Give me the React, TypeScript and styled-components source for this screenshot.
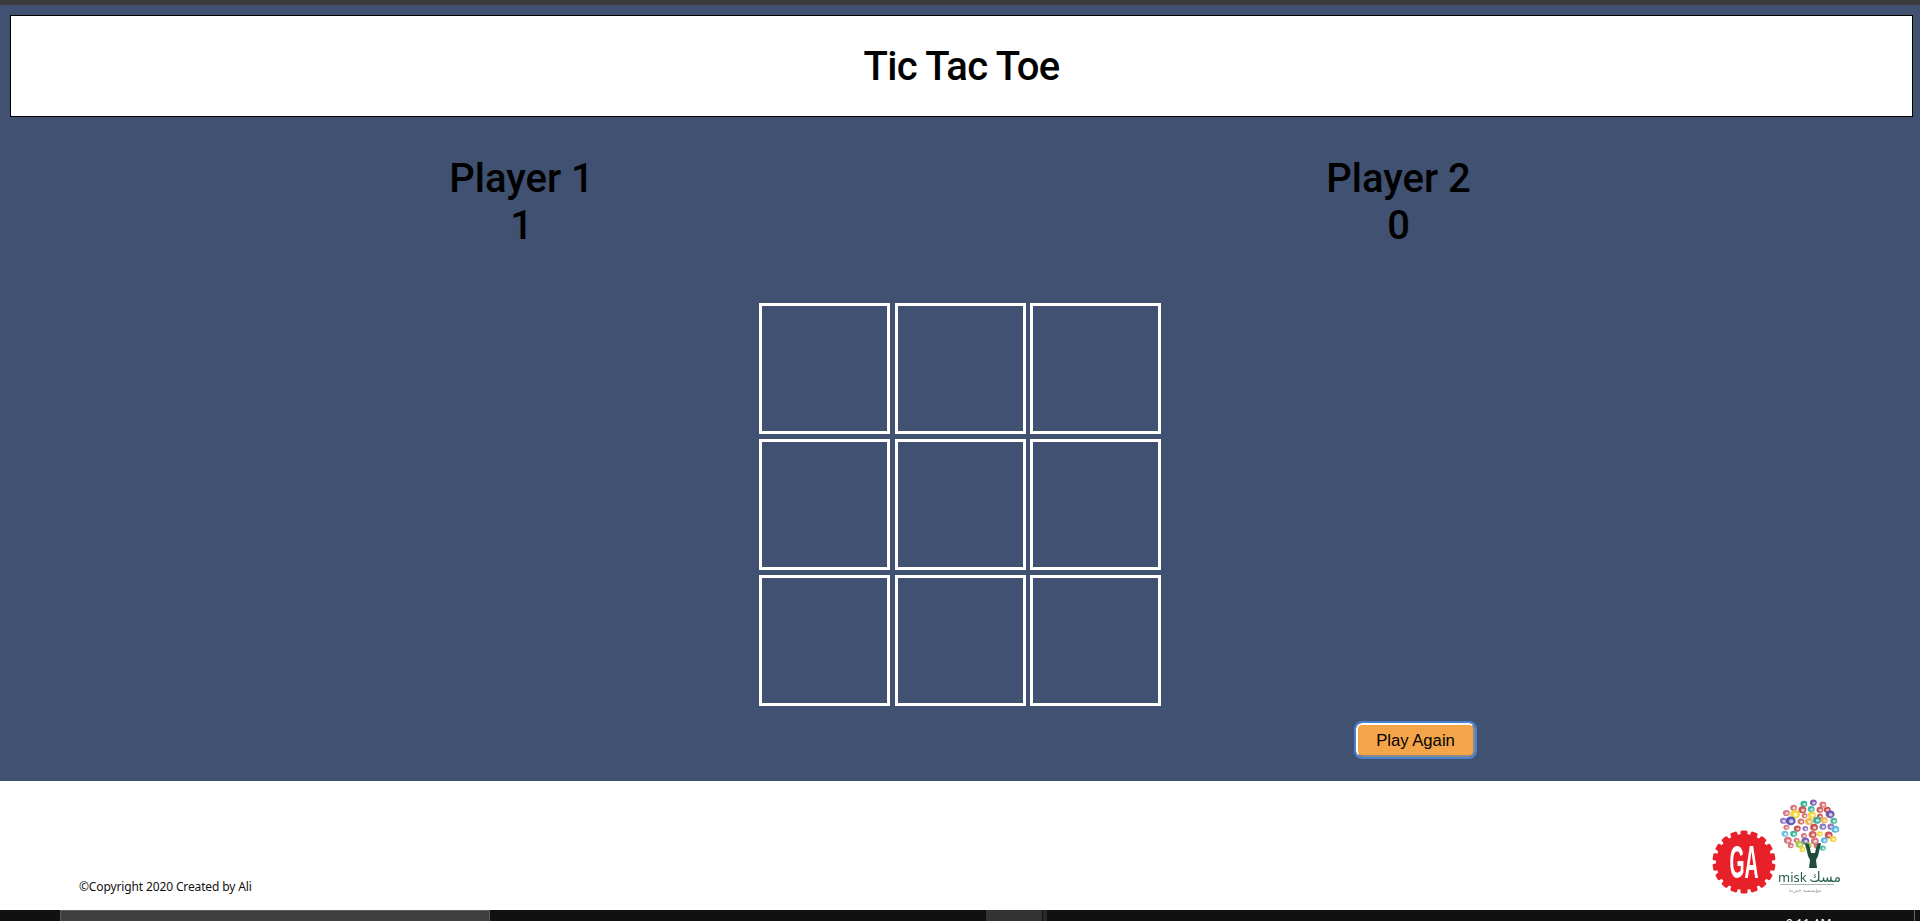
import React from "react";
import styled, { createGlobalStyle } from "styled-components";

const Global = createGlobalStyle`
  html, body { margin: 0; padding: 0; height: 100%; overflow: hidden; background: #111111; }
  * { box-sizing: border-box; }
`;

const Page = styled.div`
  width: 1920px;
  height: 921px;
  display: flex;
  flex-direction: column;
  overflow: hidden;
  font-family: Roboto, "Noto Sans", sans-serif;
  color: #000;
`;

const TopStrip = styled.div`
  height: 5px;
  flex: none;
  background: #3c3c3c;
`;

const Board = styled.main`
  height: 776px;
  flex: none;
  background: #405171;
  padding: 10px 7px 0 10px;
  display: flex;
  flex-direction: column;
`;

const Header = styled.header`
  height: 102px;
  flex: none;
  background: #fff;
  border: 1px solid #000;
  display: flex;
  align-items: center;
  justify-content: center;
  padding-top: 2px;
`;

const Title = styled.h1`
  margin: 0;
  font-size: 40px;
  font-weight: 500;
  letter-spacing: -0.7px;
  line-height: 46px;
`;

const Scores = styled.div`
  display: flex;
  justify-content: center;
  gap: 717px;
  margin-top: 38px;
  margin-left: -3px;
`;

const Score = styled.div`
  width: 160px;
  text-align: center;
  font-size: 40px;
  line-height: 47px;
  font-weight: 500;
  white-space: nowrap;
`;

const Grid = styled.div`
  display: grid;
  grid-template-columns: repeat(3, 131px);
  grid-auto-rows: 131px;
  column-gap: 4.5px;
  row-gap: 5px;
  margin: 54px 0 0 749px;
  width: max-content;
`;

const Cell = styled.div`
  border: 3px solid #fff;
`;

const AgainButton = styled.button`
  width: 119px;
  height: 34px;
  margin: 17px 0 0 1346px;
  padding: 1px 0 0;
  background: #f4a549;
  border: 2px solid;
  border-color: #fff #8a8a8a #8a8a8a #fff;
  border-radius: 6px;
  outline: 2px solid #4d7fd1;
  outline-offset: 0;
  font-family: "Liberation Sans", Arial, sans-serif;
  font-size: 16.67px;
  color: #000;
`;

const Footer = styled.footer`
  height: 129px;
  flex: none;
  background: #fff;
  display: flex;
  justify-content: space-between;
  align-items: flex-end;
  padding: 0 78px 16px 79px;
`;

const Copy = styled.span`
  font-family: "Noto Sans", sans-serif;
  font-size: 12px;
  letter-spacing: -0.13px;
  line-height: 15px;
  color: #111;
`;

const Logos = styled.div`
  display: flex;
  align-items: flex-end;
  filter: blur(0.35px);
`;

const Taskbar = styled.div`
  height: 11px;
  flex: none;
  background: #111111;
  display: flex;
  position: relative;
  overflow: hidden;
`;

const TaskItem = styled.div<{ $left: number; $width: number; $bg: string; $edge?: boolean }>`
  margin-left: ${(p) => p.$left}px;
  width: ${(p) => p.$width}px;
  height: 100%;
  flex: none;
  background: ${(p) => p.$bg};
  border: ${(p) => (p.$edge ? "1px solid #5c5c5c" : "none")};
  border-bottom: none;
`;

const Clock = styled.span`
  position: absolute;
  left: 1786px;
  top: 7px;
  font-family: "Noto Sans", sans-serif;
  font-size: 12px;
  line-height: 14px;
  color: #fff;
  white-space: nowrap;
`;

const swirls: [number, number, number, string][] = [
  [62,6,3.5,"#37b59b"],[75,4,3.5,"#7a63b5"],[88,7,3.5,"#d8767a"],[48,12,3.5,"#d8767a"],[60,15,4,"#c9534f"],
  [72,14,3.5,"#45b6a8"],[84,15,3.5,"#d05a5a"],[94,15,3.5,"#c9534f"],[38,20,3.5,"#d8767a"],[50,22,5,"#f2d63a"],
  [63,24,3,"#d8767a"],[73,23,4,"#f2d63a"],[84,25,3,"#c95a5a"],[98,22,4.5,"#6f58ad"],[34,32,3.5,"#9a79c2"],
  [44,32,5,"#5a58b5"],[58,33,3.5,"#d8767a"],[69,33,4,"#f0b84c"],[80,31,4,"#3ba89b"],[90,31,3.5,"#f0b84c"],
  [103,32,3.5,"#49b592"],[38,42,3,"#d8767a"],[53,44,3.5,"#c9534f"],[64,44,3,"#9a79c2"],[76,42,4,"#c9534f"],
  [88,41,3.5,"#8b7fc4"],[99,41,3.5,"#9a79c2"],[105,45,4,"#5fb8e0"],[36,52,3.5,"#6cc0e0"],[48,52,3.5,"#37b59b"],
  [62,55,3,"#d8767a"],[74,53,4,"#d05a5a"],[84,52,3,"#f2d63a"],[96,54,4,"#c9534f"],[40,62,4,"#d8767a"],
  [52,62,3,"#d8767a"],[64,63,4,"#7a63b5"],[77,63,4,"#d8767a"],[90,62,3.5,"#5fb8e0"],[102,60,3.5,"#f2d63a"],
  [44,70,3,"#d8767a"],[56,68,4,"#a6c94c"],[68,70,3.5,"#a6c94c"],[80,70,3.5,"#d8767a"],[60,76,3,"#f2d63a"],
  [88,74,3,"#45b6a8"],
];

const GaLogo = () => (
  <svg width="64" height="64" viewBox="0 0 64 64" role="img" aria-label="GA">
    <circle cx="32" cy="32" r="28" fill="#e8202a" />
    <g fill="#e8202a">
      {Array.from({ length: 18 }).map((_, i) => (
        <rect key={i} x="28.5" y="0.5" width="7" height="8" rx="1.5" transform={`rotate(${i * 20} 32 32)`} />
      ))}
    </g>
    <text
      x="0"
      y="48"
      textAnchor="middle"
      fill="#fff"
      fontFamily="'Liberation Sans', sans-serif"
      fontWeight="700"
      fontSize="46"
      transform="translate(32 0) scale(0.42 1)"
    >
      GA
    </text>
  </svg>
);

const MiskLogo = () => (
  <svg width="66" height="96" viewBox="0 0 66 96" role="img" aria-label="misk">
    <g transform="translate(-17.4 2) scale(0.73 0.65)">
      {swirls.map(([x, y, r, c], i) => (
        <g key={i}>
          <circle cx={x} cy={y} r={r * 1.35} fill={c} />
          <circle cx={x + 0.8} cy={y + 0.6} r={r * 0.6} fill="#fff" opacity="0.7" />
        </g>
      ))}
    </g>
    <path d="M29 45 L33 46 L35 55 L39 55 L41 46 L45 45 L42 58 L40 62 L41 70 L33 70 L34 62 L32 58 Z" fill="#1f4d3a" />
    <text x="2" y="84" fontFamily="'Noto Sans', sans-serif" fontSize="13" fill="#2a5f4c">misk</text>
    <text x="65" y="84" textAnchor="end" fontFamily="'DejaVu Sans', sans-serif" fontSize="14" fill="#2a5f4c">مسك</text>
    <rect x="4" y="86" width="54" height="0.8" fill="#8fa89d" />
    <text x="29" y="94" textAnchor="middle" fontFamily="'DejaVu Sans', sans-serif" fontSize="5.5" fill="#8f9f98">مؤسسة خيرية</text>
  </svg>
);

export default function App() {
  return (
    <Page>
      <Global />
      <TopStrip />
      <Board>
        <Header>
          <Title>Tic Tac Toe</Title>
        </Header>
        <Scores>
          <Score>Player 1<br />1</Score>
          <Score>Player 2<br />0</Score>
        </Scores>
        <Grid>
          {Array.from({ length: 9 }).map((_, i) => (
            <Cell key={i} />
          ))}
        </Grid>
        <AgainButton>Play Again</AgainButton>
      </Board>
      <Footer>
        <Copy>©Copyright 2020 Created by Ali</Copy>
        <Logos>
          <GaLogo />
          <MiskLogo />
        </Logos>
      </Footer>
      <Taskbar>
        <TaskItem $left={60} $width={430} $bg="#3f3f3f" $edge />
        <TaskItem $left={496} $width={56} $bg="#333333" />
        <TaskItem $left={1} $width={4} $bg="#2a2a2a" />
        <TaskItem $left={867} $width={1} $bg="#666666" />
        <Clock>9:11 AM</Clock>
      </Taskbar>
    </Page>
  );
}
